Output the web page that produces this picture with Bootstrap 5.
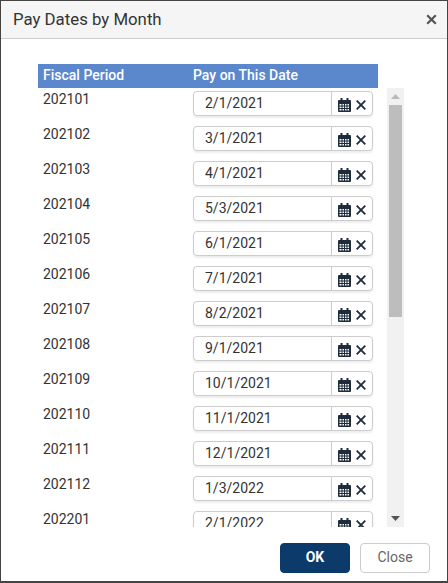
<!DOCTYPE html>
<html lang="en">
<head>
    <meta charset="UTF-8">
    <meta name="viewport" content="width=device-width, initial-scale=1.0">
    <link href="https://cdn.jsdelivr.net/npm/bootstrap@5.3.3/dist/css/bootstrap.min.css" rel="stylesheet">
    <script src="https://cdn.jsdelivr.net/npm/bootstrap@5.3.3/dist/js/bootstrap.bundle.min.js"></script>
    <title>Pay Dates by Month</title>
    <style>
        html, body {
            height: 583px;
            overflow: hidden;
        }
        body {
            font-family: Roboto, "Liberation Sans", sans-serif;
            font-size: 14px;
            color: #333;
            background-color: #fff;
        }
        .pay-dialog {
            width: 448px;
            height: 583px;
            border: 1px solid #444;
            border-bottom-width: 2px;
            background-color: #fff;
        }
        .pay-head {
            height: 38px;
            padding: 0 10px 0 12px;
            background-color: #f5f5f5;
            border-bottom: 1px solid #ccc;
        }
        .pay-title {
            font-size: 16.8px;
            color: #333;
            margin: 0;
        }
        .pay-x {
            border: 0;
            background: none;
            padding: 0;
            line-height: 0;
        }
        .pay-body {
            padding: 25px 43px 0 37px;
            height: 488px;
        }
        .pay-table {
            width: 340px;
        }
        .pay-columns {
            height: 24px;
            background-color: #5b87cd;
            color: #fff;
            font-weight: 500;
            font-size: 14px;
        }
        .pay-columns .col-period, .pay-row .col-period {
            width: 155px;
            padding-left: 5px;
        }
        .pay-rows {
            width: 340px;
            height: 439px;
            overflow: hidden;
        }
        .pay-row {
            height: 35px;
            padding-top: 3px;
        }
        .pay-row .col-period {
            line-height: 16px;
        }
        .date-box {
            width: 180px;
            height: 25px;
            border: 1px solid #ccc;
            border-radius: 4px;
            box-shadow: 0 2px 2px #eee;
            background-color: #fff;
        }
        .date-text {
            width: 138px;
            padding-left: 11px;
            border-right: 1px solid #ccc;
            line-height: 23px;
            color: #333;
        }
        .date-icons {
            padding-left: 6px;
            padding-top: 4px;
            gap: 5px;
            color: #1d2b3a;
        }
        .scroll-track {
            width: 17px;
            height: 439px;
            margin-left: 9px;
            margin-top: 24px;
            background-color: #f1f1f1;
        }
        .scroll-btn {
            height: 17px;
        }
        .scroll-thumb {
            height: 212px;
            margin: 0 2px auto;
            background-color: #bdbdbd;
        }
        .pay-foot {
            height: 55px;
            padding: 16px 17px 0 0;
            gap: 10px;
        }
        .btn-ok, .btn-close-plain {
            width: 70px;
            height: 30px;
            font-size: 14px;
            padding: 0;
            border-radius: 4px;
        }
        .btn-ok {
            background-color: #0b3a6b;
            border: 1px solid #0b3a6b;
            color: #fff;
            font-weight: 700;
        }
        .btn-close-plain {
            background-color: #fff;
            border: 1px solid #ccc;
            color: #666;
        }
    </style>
</head>
<body>
    <div class="pay-dialog d-flex flex-column">
        <div class="pay-head d-flex align-items-center justify-content-between">
            <h1 class="pay-title fw-normal">Pay Dates by Month</h1>
            <button class="pay-x" type="button" aria-label="Close">
                <svg width="11" height="11" viewBox="0 0 11 11"><path d="M1.2 1.2l8.6 8.6M9.8 1.2l-8.6 8.6" stroke="#555" stroke-width="2.2" fill="none"/></svg>
            </button>
        </div>

        <div class="pay-body d-flex">
            <div class="pay-table">
                <div class="pay-columns d-flex align-items-center">
                    <div class="col-period">Fiscal Period</div>
                    <div>Pay on This Date</div>
                </div>
                <div class="pay-rows" id="payRows"></div>
            </div>
            <div class="scroll-track d-flex flex-column">
                <div class="scroll-btn d-flex align-items-center justify-content-center">
                    <svg width="9" height="5" viewBox="0 0 9 5"><path d="M4.5 0L9 5H0z" fill="#bbb"/></svg>
                </div>
                <div class="scroll-thumb"></div>
                <div class="scroll-btn d-flex align-items-center justify-content-center">
                    <svg width="9" height="5" viewBox="0 0 9 5"><path d="M0 0h9L4.5 5z" fill="#555"/></svg>
                </div>
            </div>
        </div>

        <div class="pay-foot d-flex justify-content-end">
            <button class="btn-ok" type="button">OK</button>
            <button class="btn-close-plain" type="button">Close</button>
        </div>
    </div>

    <script>
        const payDates = [
            ['202101', '2/1/2021'], ['202102', '3/1/2021'], ['202103', '4/1/2021'],
            ['202104', '5/3/2021'], ['202105', '6/1/2021'], ['202106', '7/1/2021'],
            ['202107', '8/2/2021'], ['202108', '9/1/2021'], ['202109', '10/1/2021'],
            ['202110', '11/1/2021'], ['202111', '12/1/2021'], ['202112', '1/3/2022'],
            ['202201', '2/1/2022']
        ];

        const calendarIcon = `<svg width="13" height="14" viewBox="0 0 13 14"><path fill="currentColor" fill-rule="evenodd" d="M2.5 0h2v2h4V0h2v2H12a1 1 0 0 1 1 1v10a1 1 0 0 1-1 1H1a1 1 0 0 1-1-1V3a1 1 0 0 1 1-1h1.5zM1.5 6v1.5h2V6zm3 0v1.5h1.500V6zm2.500 0v1.500h1.500V6zm2.500 0v1.500h1.500V6zM1.500 8.500V10h2V8.500zm3 0V10h1.500V8.500zm2.500 0V10h1.500V8.500zm2.500 0V10h1.500V8.500zM1.500 11v1.500h2V11zm3 0v1.500h1.500V11zm2.500 0v1.500h1.500V11zm2.500 0v1.500h1.500V11z"/></svg>`;
        const clearIcon = `<svg width="10" height="10" viewBox="0 0 10 10"><path d="M.7.7l8.600 8.600M9.300.7L.7 9.300" stroke="currentColor" stroke-width="1.800" fill="none"/></svg>`;

        document.getElementById('payRows').innerHTML = payDates.map(([period, date]) => `
            <div class="pay-row d-flex">
                <div class="col-period">${period}</div>
                <div class="date-box d-flex align-items-center">
                    <div class="date-text">${date}</div>
                    <div class="date-icons d-flex align-items-center">${calendarIcon}${clearIcon}</div>
                </div>
            </div>
        `).join('');
    </script>
</body>
</html>
